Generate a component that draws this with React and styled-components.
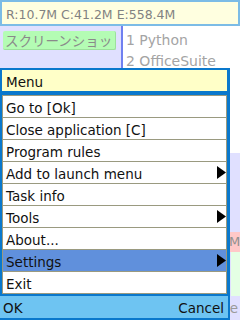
import React from "react";
import styled, { createGlobalStyle } from "styled-components";

const Global = createGlobalStyle`
  html, body { margin: 0; padding: 0; }
  body {
    width: 240px;
    height: 320px;
    overflow: hidden;
    background: #e0e0ff;
    font-family: "DejaVu Sans", "Noto Sans CJK JP", sans-serif;
  }
`;

const Screen = styled.div`
  position: relative;
  width: 240px;
  height: 320px;
  overflow: hidden;
  background: #e0e0ff;
`;

const StatusBar = styled.div`
  box-sizing: border-box;
  height: 26px;
  border: 2px solid #7cbce6;
  background: #ffffe0;
  color: #828282;
  font-size: 12.5px;
  padding: 2px 0 0 4px;
  display: flex;
  align-items: center;
  white-space: nowrap;
`;

const TopRow = styled.div`
  display: flex;
  align-items: flex-start;
`;

const GreenButton = styled.div`
  box-sizing: border-box;
  margin: 5px 0 0 3px;
  width: 113px;
  height: 19px;
  background: #b4fcb4;
  border-right: 1px solid #9ce09c;
  border-bottom: 1px solid #9ce09c;
  border-radius: 2px;
  color: #8a8a8a;
  font-family: "Noto Sans CJK JP", sans-serif;
  font-size: 13.5px;
  line-height: 18px;
  padding-left: 2px;
  white-space: nowrap;
  overflow: hidden;
`;

const ListPanel = styled.div`
  box-sizing: border-box;
  margin-left: 5px;
  flex: 1;
  height: 127px;
  background: #ffffff;
  border-left: 2px solid #7080f0;
  padding: 4px 0 0 3px;
  color: #a4a4a4;
  font-size: 14px;
`;

const ListItem = styled.div`
  height: 21px;
  line-height: 21px;
  white-space: nowrap;
`;

const SideStack = styled.div`
  display: flex;
  flex-direction: column;
  align-items: flex-end;
  margin-top: 79px;
`;

const PinkChip = styled.div`
  box-sizing: border-box;
  width: 12px;
  height: 20px;
  background: #ffc8c8;
  color: #909090;
  font-size: 13px;
  line-height: 20px;
  padding-left: 1px;
  overflow: hidden;
`;

const GreenPanel = styled.div`
  width: 9px;
  height: 44px;
  background: #e4ffe4;
`;

const SideText = styled.div`
  color: #9a9a9a;
  font-size: 13.5px;
  line-height: 24px;
  padding-right: 2px;
`;

const MenuPanel = styled.div`
  position: absolute;
  left: 0;
  top: 68px;
  width: 230px;
  bottom: 0;
  box-sizing: border-box;
  background: #0a78cc;
  padding-top: 2px;
  display: flex;
  flex-direction: column;
  color: #111111;
  font-size: 13.5px;
`;

const MenuTitle = styled.div`
  margin: 0 3px 0 2px;
  height: 21px;
  background: #ffffc8;
  padding: 2px 0 0 4px;
  box-sizing: border-box;
  display: flex;
  align-items: center;
`;

const ItemList = styled.div`
  margin: 4px 3px 0 2px;
  border: 1px solid #9a9a80;
  background: #ffffff;
  display: flex;
  flex-direction: column;
`;

const Item = styled.div`
  box-sizing: border-box;
  height: ${(p) => (p.$first ? "21px" : "22px")};
  border-top: ${(p) => (p.$first ? "none" : "1px solid #9a9a80")};
  background: ${(p) => (p.$active ? "#6090dc" : "#ffffff")};
  display: flex;
  align-items: center;
  justify-content: space-between;
  padding: 2px 0 0 3px;
  white-space: nowrap;
`;

const Arrow = styled.svg`
  width: 9px;
  height: 13px;
  margin-top: -2px;
  flex: none;
`;

const SoftBar = styled.div`
  margin: 2px 2px 0 0;
  height: 22px;
  background: #6ec4f2;
  display: flex;
  justify-content: space-between;
  align-items: center;
  padding: 2px 4px 0 3px;
  box-sizing: border-box;
`;

const items = [
  { label: "Go to [Ok]" },
  { label: "Close application [C]" },
  { label: "Program rules" },
  { label: "Add to launch menu", sub: true },
  { label: "Task info" },
  { label: "Tools", sub: true },
  { label: "About..." },
  { label: "Settings", sub: true, active: true },
  { label: "Exit" },
];

export default function App() {
  return (
    <Screen>
      <Global />
      <StatusBar>R:10.7M C:41.2M E:558.4M</StatusBar>
      <TopRow>
        <GreenButton>スクリーンショッ</GreenButton>
        <ListPanel>
          <ListItem>1 Python</ListItem>
          <ListItem>2 OfficeSuite</ListItem>
        </ListPanel>
      </TopRow>
      <SideStack>
        <PinkChip>M</PinkChip>
        <GreenPanel />
        <SideText>e</SideText>
      </SideStack>
      <MenuPanel>
        <MenuTitle>Menu</MenuTitle>
        <ItemList>
          {items.map((it, i) => (
            <Item key={it.label} $first={i === 0} $active={it.active}>
              <span>{it.label}</span>
              {it.sub && (
                <Arrow viewBox="0 0 9 13">
                  <polygon points="0,0 9,6.5 0,13" fill="#000" />
                </Arrow>
              )}
            </Item>
          ))}
        </ItemList>
        <SoftBar>
          <span>OK</span>
          <span>Cancel</span>
        </SoftBar>
      </MenuPanel>
    </Screen>
  );
}
